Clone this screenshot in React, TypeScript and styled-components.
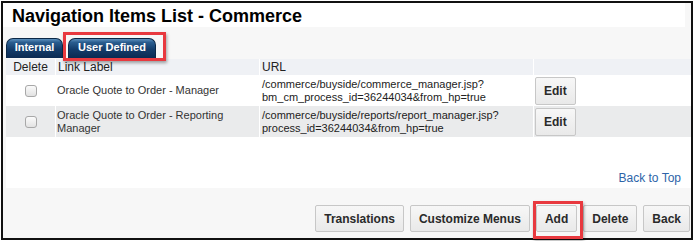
import React from "react";
import styled, { createGlobalStyle } from "styled-components";

const Global = createGlobalStyle`
  html, body { margin: 0; padding: 0; background: #ffffff; }
  * { box-sizing: border-box; }
`;

const Frame = styled.div`
  width: 692px;
  height: 239px;
  margin: 1px;
  border: 2px solid #111;
  background: #f7f7f7;
  display: flex;
  flex-direction: column;
  font-family: "Liberation Sans", Arial, sans-serif;
`;

const TitleBar = styled.div`
  height: 24px;
  margin-right: 6px;
  background: #ffffff;
  padding: 3px 0 0 9px;
`;

const Title = styled.h1`
  margin: 0;
  font-size: 18px;
  line-height: 21px;
  font-weight: bold;
  color: #000;
`;

const TabBar = styled.div`
  height: 32px;
  display: flex;
  align-items: flex-end;
  gap: 5px;
  padding: 0 0 1px 3px;
`;

const Tab = styled.div<{ $w: number }>`
  position: relative;
  width: ${(p) => p.$w}px;
  height: 20px;
  border: 1px solid #0b2847;
  border-bottom: none;
  border-radius: 7px 7px 0 0;
  background: linear-gradient(#5b8fbd 0%, #2a5d8f 18%, #133c6a 55%, #0b2a52 100%);
  color: #fff;
  font-size: 11px;
  font-weight: bold;
  line-height: 17px;
  text-align: center;
`;

const Highlight = styled.div<{ $t: number; $r: number; $b: number; $l: number }>`
  position: absolute;
  top: ${(p) => p.$t}px;
  right: ${(p) => p.$r}px;
  bottom: ${(p) => p.$b}px;
  left: ${(p) => p.$l}px;
  border: 3px solid #e8393f;
  box-shadow: 1px 2px 3px rgba(0, 0, 0, 0.35);
  pointer-events: none;
  z-index: 2;
`;

const Panel = styled.div`
  height: 129px;
  margin-left: 3px;
  background: #fff;
  display: flex;
  flex-direction: column;
`;

const GridRow = styled.div<{ $h: number }>`
  display: grid;
  grid-template-columns: 49px 203px 273px 1fr;
  column-gap: 1px;
  height: ${(p) => p.$h}px;
  background: #fff;
`;

const HeadCell = styled.div<{ $center?: boolean }>`
  background: #eff1f5;
  font-size: 12px;
  line-height: 16px;
  color: #222;
  padding-left: ${(p) => (p.$center ? 0 : 2)}px;
  text-align: ${(p) => (p.$center ? "center" : "left")};
  white-space: nowrap;
`;

const Cell = styled.div<{ $bg: string; $center?: boolean; $pl?: number }>`
  background: ${(p) => p.$bg};
  display: flex;
  align-items: center;
  justify-content: ${(p) => (p.$center ? "center" : "flex-start")};
  padding-left: ${(p) => p.$pl ?? 0}px;
  font-size: 11px;
  line-height: 12.5px;
  color: #333;
`;

const UrlText = styled.span`
  color: #222;
`;

const Check = styled.input.attrs({ type: "checkbox" })`
  appearance: none;
  -webkit-appearance: none;
  width: 12px;
  height: 12px;
  margin: 0;
  border: 1px solid #a8a8a8;
  border-radius: 3px;
  background: linear-gradient(#fbfbfb, #e2e2e2);
`;

const Button = styled.button<{ $h?: number }>`
  position: relative;
  height: ${(p) => p.$h ?? 27}px;
  padding: 0 8px;
  border: 1px solid #c7c7c7;
  border-radius: 2px;
  background: linear-gradient(#f7f7f7, #e9e9e9);
  font-family: "Liberation Sans", Arial, sans-serif;
  font-size: 12px;
  font-weight: bold;
  color: #2a2a2a;
  cursor: pointer;
  white-space: nowrap;
`;

const BackToTop = styled.a`
  margin-top: auto;
  align-self: flex-end;
  margin-right: 10px;
  margin-bottom: 3px;
  font-size: 12px;
  line-height: 14px;
  color: #2d64a8;
  text-decoration: none;
`;

const Footer = styled.div`
  height: 50px;
  display: flex;
  justify-content: flex-end;
  align-items: flex-start;
  gap: 6px;
  padding: 17px 1px 0 0;
`;

const rows = [
  {
    label: "Oracle Quote to Order - Manager",
    url: ["/commerce/buyside/commerce_manager.jsp?", "bm_cm_process_id=36244034&from_hp=true"],
    bg: "#ffffff",
  },
  {
    label: "Oracle Quote to Order - Reporting Manager",
    url: ["/commerce/buyside/reports/report_manager.jsp?", "process_id=36244034&from_hp=true"],
    bg: "#eaebec",
  },
];

export default function App() {
  return (
    <>
      <Global />
      <Frame>
        <TitleBar>
          <Title>Navigation Items List - Commerce</Title>
        </TitleBar>
        <TabBar>
          <Tab $w={57}>Internal</Tab>
          <Tab $w={88}>
            User Defined
            <Highlight $t={-7} $r={-11} $b={-3} $l={-6} />
          </Tab>
        </TabBar>
        <Panel>
          <GridRow $h={16}>
            <HeadCell $center>Delete</HeadCell>
            <HeadCell>Link Label</HeadCell>
            <HeadCell>URL</HeadCell>
            <HeadCell />
          </GridRow>
          {rows.map((r) => (
            <GridRow $h={31} key={r.label}>
              <Cell $bg={r.bg} $center>
                <Check />
              </Cell>
              <Cell $bg={r.bg} $pl={1}>
                <span style={{ maxWidth: 190 }}>{r.label}</span>
              </Cell>
              <Cell $bg={r.bg} $pl={2}>
                <UrlText>
                  {r.url[0]}
                  <br />
                  {r.url[1]}
                </UrlText>
              </Cell>
              <Cell $bg={r.bg} $pl={1}>
                <Button $h={28}>Edit</Button>
              </Cell>
            </GridRow>
          ))}
          <BackToTop href="#">Back to Top</BackToTop>
        </Panel>
        <Footer>
          <Button>Translations</Button>
          <Button>Customize Menus</Button>
          <Button>
            Add
            <Highlight $t={-5} $r={-7} $b={-8} $l={-4} />
          </Button>
          <Button>Delete</Button>
          <Button>Back</Button>
        </Footer>
      </Frame>
    </>
  );
}
